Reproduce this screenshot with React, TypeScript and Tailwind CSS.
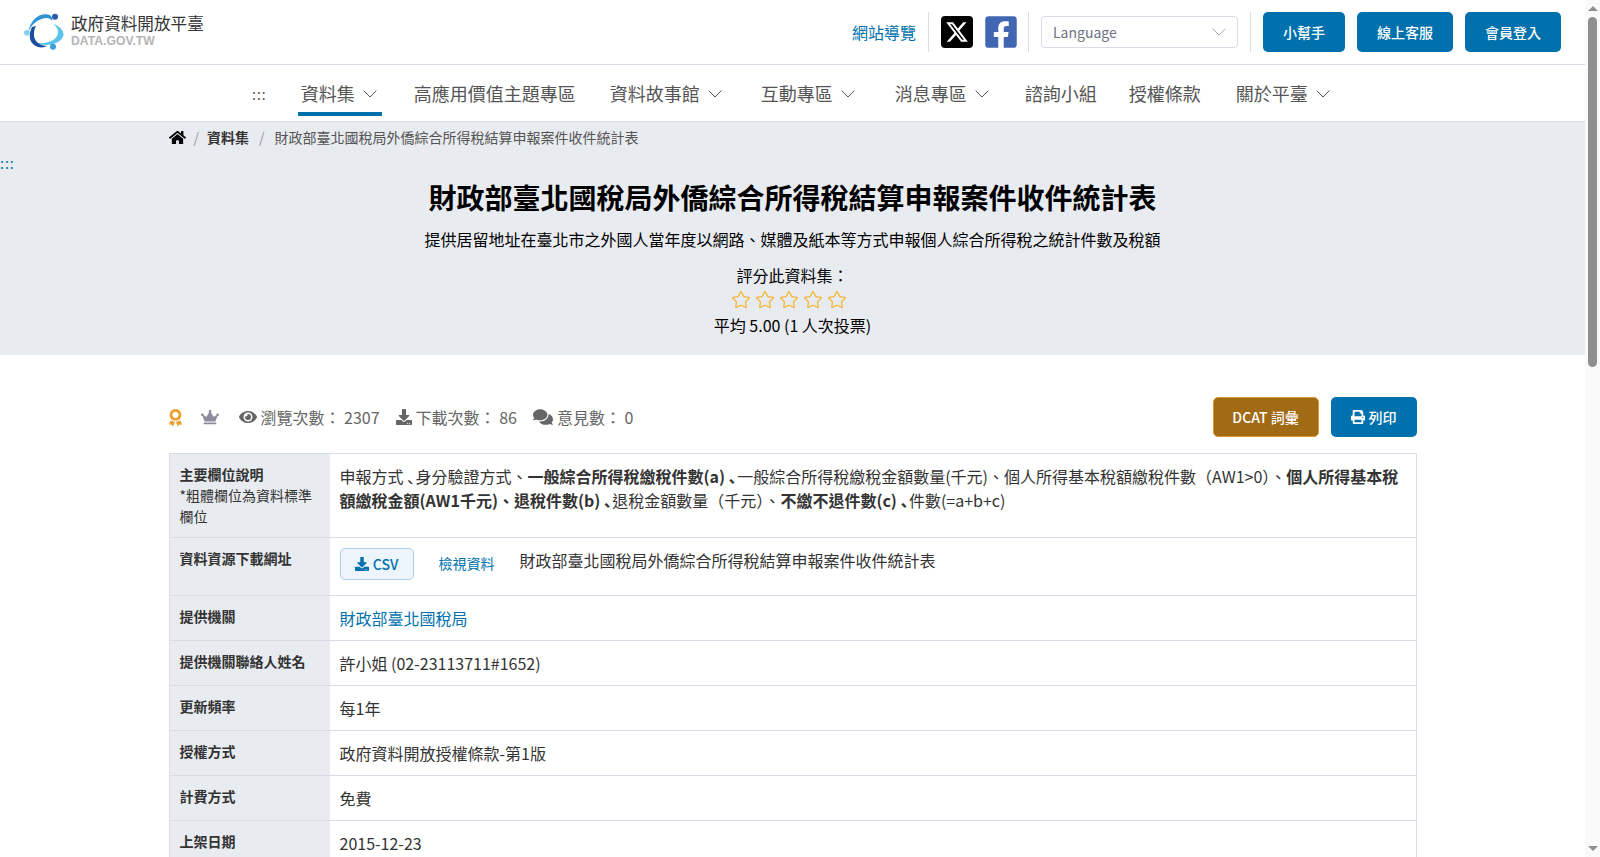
import React from 'react';
import { FaHome, FaEye, FaDownload, FaComments, FaPrint, FaCrown, FaAward, FaFacebookSquare } from 'react-icons/fa';
import { FaXTwitter } from 'react-icons/fa6';
import { Star } from 'lucide-react';

const navItems = [
  { label: '資料集', drop: true, active: true, gap: 'mr-[29px]' },
  { label: '高應用價值主題專區', gap: 'mr-[28px]' },
  { label: '資料故事館', drop: true, gap: 'mr-[31px]' },
  { label: '互動專區', drop: true, gap: 'mr-[32px]' },
  { label: '消息專區', drop: true, gap: 'mr-[28px]' },
  { label: '諮詢小組', gap: 'mr-[26px]' },
  { label: '授權條款', gap: 'mr-[29px]' },
  { label: '關於平臺', drop: true, gap: '' },
];

const simpleRows = [
  { label: '提供機關聯絡人姓名', value: '許小姐 (02-23113711#1652)' },
  { label: '更新頻率', value: '每1年' },
  { label: '授權方式', value: '政府資料開放授權條款-第1版' },
  { label: '計費方式', value: '免費' },
  { label: '上架日期', value: '2015-12-23' },
];

function Logo() {
  return (
    <svg width="40" height="38" viewBox="0 0 40 38" className="shrink-0">
      <path d="M13 30 C24 31 33 27 34 20 C34.5 16 32 13 29 11 C34 12 40 17 39.5 22 C38 30 24 35 13 30 Z" fill="#5cc4ea" />
      <path d="M24 1.5 C14 0 6 8 4.5 19 C7 12 13 6 22 5 C25 5 27 6 28 8 C29 5 27 2 24 1.5 Z" fill="#2f93d6" />
      <path d="M8 14 C4 22 5 31 14 34 C18 35 21 34 23 33 C16 33 9 28 10 20 C10 17 11 15 12 13 Z" fill="#1b4da0" />
      <circle cx="31" cy="3.7" r="3" fill="#2a5cab" />
      <circle cx="2.9" cy="19.7" r="2.8" fill="#7fd0ee" />
      <circle cx="29" cy="33.7" r="3" fill="#3a9fdc" />
    </svg>
  );
}

function Chevron({ className }: { className?: string }) {
  return (
    <svg width="14" height="8" viewBox="0 0 14 8" fill="none" stroke="currentColor" strokeWidth="1" className={className}>
      <path d="M0.7 0.7 L7 7 L13.3 0.7" />
    </svg>
  );
}

function Divider() {
  return <div className="w-px h-10 bg-[#d9dce6]" />;
}

function TopButton({ children, width }: { children: React.ReactNode; width: string }) {
  return (
    <button className={`${width} h-10 rounded-[5px] bg-[#0071ad] text-white text-sm font-medium`}>{children}</button>
  );
}

function Row({ label, children }: { label: React.ReactNode; children: React.ReactNode }) {
  return (
    <div className="flex border-b border-[#d9dce6]">
      <div className="w-[160px] shrink-0 bg-[#e8ebf0] p-2.5 text-sm leading-[21px] text-[#333]">{label}</div>
      <div className="flex-1 p-2.5 text-base leading-6 text-[#333]">{children}</div>
    </div>
  );
}

function Comma() {
  return <span className="ml-1">､</span>;
}

function Scrollbar() {
  return (
    <div className="w-[15px] shrink-0 bg-[#fafafa] flex flex-col items-center">
      <div className="mt-1.5 w-0 h-0 border-x-[5px] border-x-transparent border-b-[5px] border-b-[#8f8f8f]" />
      <div className="mt-1.5 w-[9px] h-[350px] rounded-full bg-[#8f8f8f]" />
      <div className="mt-auto mb-1.5 w-0 h-0 border-x-[5px] border-x-transparent border-t-[5px] border-t-[#8f8f8f]" />
    </div>
  );
}

export default function App() {
  return (
    <div className="h-screen flex overflow-hidden bg-white font-['Noto_Sans_CJK_TC',sans-serif] text-[#222]">
      <div className="flex-1 min-w-0">
        <header className="h-[65px] flex items-center border-b border-[#d9dce6] pl-6 pr-6">
          <div className="flex items-center gap-[7px]">
            <Logo />
            <div className="flex flex-col -mt-[3px]">
              <span className="text-[16.6px] leading-[21px] text-[#333]">政府資料開放平臺</span>
              <span className="font-['Liberation_Sans',sans-serif] text-[12.2px] leading-[14px] font-bold text-[#b5b5b5]">DATA.GOV.TW</span>
            </div>
          </div>
          <div className="ml-auto flex items-center">
            <a className="text-base text-[#0071ad] mr-3">網站導覽</a>
            <Divider />
            <div className="flex items-center gap-3 ml-3 mr-[11px]">
              <span className="w-8 h-8 rounded-[4px] bg-black flex items-center justify-center text-white">
                <FaXTwitter size={24} />
              </span>
              <FaFacebookSquare size={36} className="text-[#4267b2] -mx-0.5" />
            </div>
            <Divider />
            <div className="w-[197px] h-8 mx-3 rounded-[4px] border border-[#d9dce6] flex items-center justify-between pl-[11px] pr-[11px] text-sm text-[#6e7280]">
              Language
              <Chevron className="text-[#aaa]" />
            </div>
            <Divider />
            <div className="flex items-center gap-3 ml-3">
              <TopButton width="w-[82px]">小幫手</TopButton>
              <TopButton width="w-[96px]">線上客服</TopButton>
              <TopButton width="w-[96px]">會員登入</TopButton>
            </div>
          </div>
        </header>

        <nav className="h-[57px] flex items-stretch border-b border-[#d9dce6] pl-[252px] text-[18px] text-[#555]">
          <a className="mr-[31px] pt-0.5 flex items-center tracking-[1px] text-sm">:::</a>
          {navItems.map((item) => (
            <a
              key={item.label}
              className={`flex items-center gap-2 pl-[3px] pr-[3px] pt-2.5 mb-[5px] border-b-4 ${item.active ? 'border-[#0071ad]' : 'border-transparent'} ${item.drop ? 'pr-[5px]' : ''} ${item.gap}`}
            >
              {item.label}
              {item.drop && <Chevron className="text-[#555]" />}
            </a>
          ))}
        </nav>

        <section className="h-[233px] bg-[#e8ebf0] relative">
          <div className="max-w-[1280px] mx-auto px-4">
            <div className="flex items-center h-[30px] text-sm text-[#555]">
              <FaHome size={17} className="text-black" />
              <span className="mx-2 text-[#999]">/</span>
              <span className="font-bold text-[#333]">資料集</span>
              <span className="mx-2.5 text-[#999]">/</span>
              <span>財政部臺北國稅局外僑綜合所得稅結算申報案件收件統計表</span>
            </div>
          </div>
          <a className="absolute left-0 top-[31px] text-sm leading-5 tracking-[1px] text-[#0071ad]">:::</a>
          <div className="flex flex-col items-center pt-6">
            <h1 className="text-[28px] leading-[42px] font-bold text-black">財政部臺北國稅局外僑綜合所得稅結算申報案件收件統計表</h1>
            <p className="mt-[9px] text-base leading-6 text-black">提供居留地址在臺北市之外國人當年度以網路、媒體及紙本等方式申報個人綜合所得稅之統計件數及稅額</p>
            <p className="mt-3 text-base leading-6 text-black">評分此資料集：</p>
            <div className="flex gap-1 mt-[3px] mr-[7px] h-5 items-center">
              {[0, 1, 2, 3, 4].map((i) => (
                <Star key={i} size={20} strokeWidth={1.5} className="text-[#f5b52e]" />
              ))}
            </div>
            <p className="mt-[3px] text-base leading-6 text-black">平均 5.00 (1 人次投票)</p>
          </div>
        </section>

        <main className="max-w-[1280px] mx-auto px-4">
          <div className="flex items-center justify-between mt-[42px] h-10 text-base text-[#666]">
            <div className="flex items-center">
              <FaAward size={17} className="text-[#eb9f2e] -ml-[2px]" />
              <FaCrown size={18} className="text-[#8b8c9c] ml-[17px]" />
              <FaEye size={18} className="ml-5" />
              <span className="ml-1">瀏覽次數： 2307</span>
              <FaDownload size={16} className="ml-4" />
              <span className="ml-1">下載次數： 86</span>
              <FaComments size={20} className="ml-4" />
              <span className="ml-1">意見數： 0</span>
            </div>
            <div className="flex items-center gap-3 text-sm font-medium text-white">
              <button className="w-[106px] h-10 rounded-[5px] bg-[#a16a15] border border-[#dc982f]">DCAT 詞彙</button>
              <button className="w-[86px] h-10 rounded-[5px] bg-[#0071ad] flex items-center justify-center gap-1">
                <FaPrint size={14} />
                列印
              </button>
            </div>
          </div>

          <div className="mt-4 border-x border-t border-[#d9dce6]">
            <Row
              label={
                <>
                  <b>主要欄位說明</b>
                  <br />
                  *粗體欄位為資料標準欄位
                </>
              }
            >
              申報方式<Comma />身分驗證方式、<b>一般綜合所得稅繳稅件數(a)<Comma /></b>一般綜合所得稅繳稅金額數量(千元)、個人所得基本稅額繳稅件數（AW1&gt;0）、<b>個人所得基本稅額繳稅金額(AW1千元)、退稅件數(b)<Comma /></b>退稅金額數量（千元）、<b>不繳不退件數(c)<Comma /></b>件數(=a+b+c)
            </Row>
            <Row label={<b>資料資源下載網址</b>}>
              <div className="flex items-start h-[37px]">
                <a className="w-[74px] h-8 rounded-[5px] border border-[#a9cdee] bg-[#edf4fc] flex items-center justify-center gap-1 text-sm font-medium text-[#0071ad]">
                  <FaDownload size={14} />
                  CSV
                </a>
                <a className="ml-[25px] mt-[5px] text-sm text-[#0071ad]">檢視資料</a>
                <span className="ml-[25px]">財政部臺北國稅局外僑綜合所得稅結算申報案件收件統計表</span>
              </div>
            </Row>
            <Row label={<b>提供機關</b>}>
              <a className="text-[#0071ad]">財政部臺北國稅局</a>
            </Row>
            {simpleRows.map((r) => (
              <Row key={r.label} label={<b>{r.label}</b>}>
                {r.value}
              </Row>
            ))}
          </div>
        </main>
      </div>
      <Scrollbar />
    </div>
  );
}
